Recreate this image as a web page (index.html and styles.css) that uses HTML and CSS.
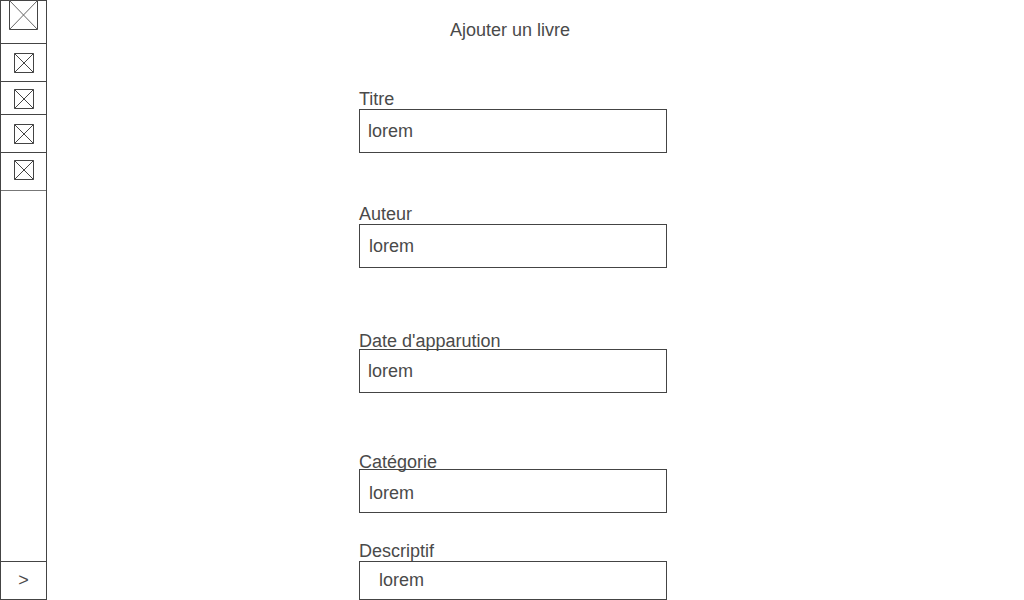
FILE: index.html
```html
<!DOCTYPE html>
<html lang="fr">
<head>
<meta charset="utf-8">
<meta name="viewport" content="width=device-width, initial-scale=1">
<title>Ajouter un livre</title>
<link rel="stylesheet" href="styles.css">
</head>
<body class="page">
  <nav class="sidebar">
    <a class="cell cell-logo" href="#" aria-label="Accueil">
      <svg class="icon-large" viewBox="0 0 29 30"><path d="M.5 .5h28v29h-28z"/><path class="thin" d="M.5 .5l28 29M28.5 .5l-28 29"/></svg>
    </a>
    <a class="cell" href="#" aria-label="Livres">
      <svg class="icon" viewBox="0 0 20 20"><path d="M.5 .5h19v19h-19z"/><path d="M.5 .5l19 19M19.5 .5l-19 19"/></svg>
    </a>
    <a class="cell cell-short" href="#" aria-label="Auteurs">
      <svg class="icon" viewBox="0 0 20 20"><path d="M.5 .5h19v19h-19z"/><path d="M.5 .5l19 19M19.5 .5l-19 19"/></svg>
    </a>
    <a class="cell" href="#" aria-label="Catégories">
      <svg class="icon" viewBox="0 0 20 20"><path d="M.5 .5h19v19h-19z"/><path d="M.5 .5l19 19M19.5 .5l-19 19"/></svg>
    </a>
    <a class="cell cell-last" href="#" aria-label="Compte">
      <svg class="icon" viewBox="0 0 20 20"><path d="M.5 .5h19v19h-19z"/><path d="M.5 .5l19 19M19.5 .5l-19 19"/></svg>
    </a>
    <button class="expand" type="button">&gt;</button>
  </nav>
  <main class="content">
    <h1 class="title">Ajouter un livre</h1>
    <form class="form">
      <div class="field">
        <label class="label" for="titre">Titre</label>
        <input class="input" id="titre" type="text" value="lorem">
      </div>
      <div class="field field-author">
        <label class="label" for="auteur">Auteur</label>
        <input class="input input-inset" id="auteur" type="text" value="lorem">
      </div>
      <div class="field field-date">
        <label class="label" for="date">Date d'apparution</label>
        <input class="input" id="date" type="text" value="lorem">
      </div>
      <div class="field field-category">
        <label class="label" for="categorie">Catégorie</label>
        <input class="input input-inset input-low" id="categorie" type="text" value="lorem">
      </div>
      <div class="field field-description">
        <label class="label" for="descriptif">Descriptif</label>
        <input class="input input-description" id="descriptif" type="text" value="lorem">
      </div>
    </form>
  </main>
</body>
</html>
```
FILE: styles.css
```css
*,
*::before,
*::after {
  box-sizing: border-box;
}

.page {
  display: grid;
  grid-template-columns: 47px 1fr 45px;
  min-height: 100vh;
  margin: 0;
  background: #fff;
  color: #4a4a4a;
  font: 18px/20px "Liberation Sans", Arial, sans-serif;
}

.sidebar {
  display: flex;
  flex-direction: column;
  border: 1px solid #444;
}

.cell {
  height: 38px;
  padding: 9px 0 0 13px;
  border-bottom: 1px solid #444;
}

.cell-logo {
  height: 43px;
  padding: 0 0 0 8px;
}

.cell-short {
  height: 33px;
  padding-top: 7px;
}

.cell-last {
  padding-top: 7px;
  border-bottom-color: #777;
}

.icon,
.icon-large {
  display: block;
  width: 20px;
  height: 20px;
  fill: none;
  stroke: #444;
  stroke-width: 1;
}

.icon-large {
  width: 29px;
  height: 30px;
  margin-top: -1px;
}

.thin {
  stroke: #666;
}

.expand {
  height: 38px;
  margin-top: auto;
  padding: 0 0 2px;
  border: 0;
  border-top: 1px solid #444;
  background: none;
  color: inherit;
  font: inherit;
}

.content {
  padding-top: 20px;
}

.title {
  margin: 0 0 49px;
  padding-right: 6px;
  font: inherit;
  text-align: center;
}

.form {
  width: 308px;
  max-width: 100%;
  margin: 0 auto;
}

.field {
  display: flex;
  flex-direction: column;
}

.field-author {
  margin-top: 51px;
}

.field-date {
  margin-top: 63px;
}

.field-category {
  margin-top: 59px;
}

.field-description {
  margin-top: 28px;
}

.field-date .label {
  margin-bottom: -2px;
}

.field-category .label {
  margin-bottom: -3px;
}

.input {
  width: 100%;
  height: 44px;
  padding: 0 8px;
  border: 1px solid #444;
  border-radius: 0;
  background: transparent;
  color: inherit;
  font: inherit;
}

.input-inset {
  padding-left: 9px;
}

.input-low {
  padding-top: 4px;
}

.input-description {
  height: 39px;
  padding-left: 19px;
}
```
